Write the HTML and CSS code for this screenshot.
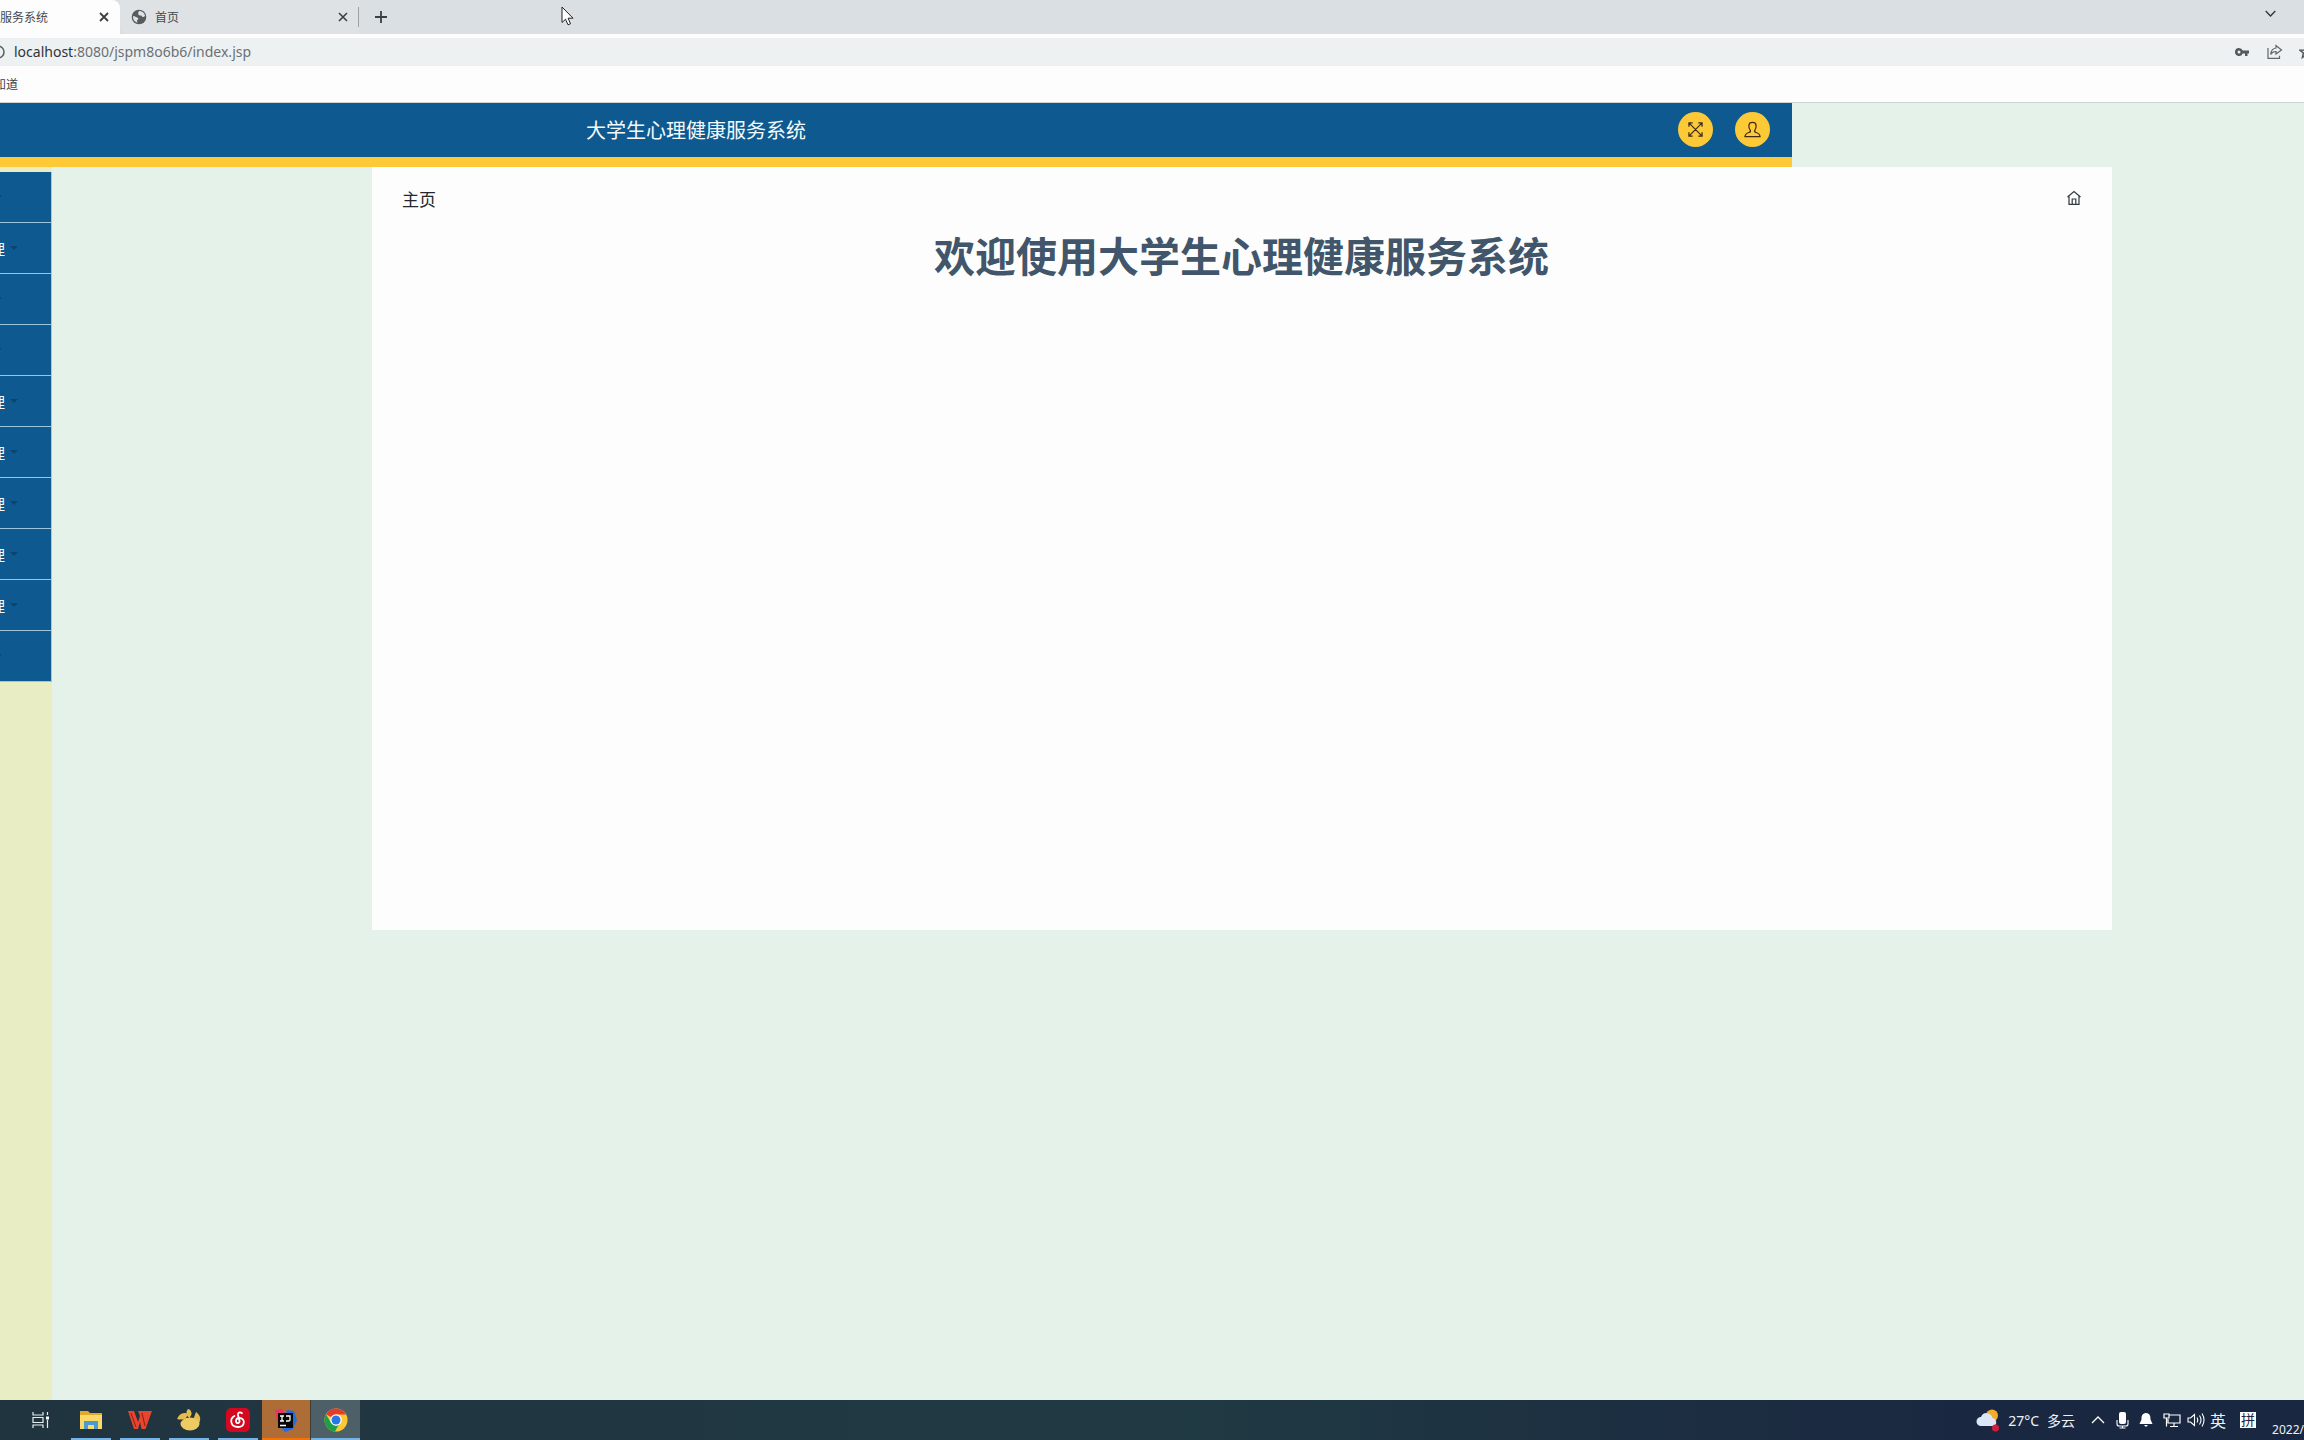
FILE: index.html
```
<!DOCTYPE html>
<html lang="zh-CN">
<head>
<meta charset="utf-8">
<meta name="viewport" content="width=device-width, initial-scale=1">
<title>大学生心理健康服务系统</title>
<link rel="stylesheet" href="styles.css">
</head>
<body>
<div class="tabstrip">
  <div class="tab tab-active"><span class="tab-title">服务系统</span>
    <button class="icon-btn" aria-label="关闭"><svg width="10" height="10" viewBox="0 0 10 10"><path d="M1 1l8 8M9 1l-8 8" stroke="#3c4043" stroke-width="1.8" fill="none"/></svg></button>
  </div>
  <div class="tab tab-idle">
    <svg width="16" height="16" viewBox="0 0 16 16"><circle cx="8" cy="8" r="7.3" fill="#565b5f"/><path d="M2 7c2 0 3 1 5 2 1 .8 0 2-1 2l.4 2.7C3.500 13 1.800 10.500 2 7zM8 2c3.500 0 5.700 2.300 6 5-1.500 1.600-2.800 1.400-3.300-.2L8 6.200C6.800 5.500 7 3.500 8 2z" fill="#dee2e4"/></svg>
    <span class="tab-title">首页</span>
    <button class="icon-btn" aria-label="关闭"><svg width="10" height="10" viewBox="0 0 10 10"><path d="M1 1l8 8M9 1l-8 8" stroke="#3c4043" stroke-width="1.600" fill="none"/></svg></button>
  </div>
  <button class="icon-btn new-tab" aria-label="新标签页"><svg width="12" height="12" viewBox="0 0 12 12"><path d="M6 0v12M0 6h12" stroke="#3c4043" stroke-width="1.800"/></svg></button>
  <button class="icon-btn tab-search" aria-label="搜索标签页"><svg width="11" height="8" viewBox="0 0 11 8"><path d="M.7 1l4.800 5L10.300 1" stroke="#333" stroke-width="1.300" fill="none"/></svg></button>
</div>
<div class="toolbar">
  <div class="address">
    <svg class="info" width="5" height="16" viewBox="0 0 5 16"><path d="M-2 2a6 6 0 0 1 0 12" fill="none" stroke="#5f6368" stroke-width="1.600"/></svg>
    <span class="url"><b>localhost</b>:8080/jspm8o6b6/index.jsp</span>
    <button class="icon-btn" aria-label="密码"><svg width="14" height="10" viewBox="0 0 14 10"><path fill-rule="evenodd" d="M4 1a4 4 0 1 0 3.700 5.400H10V9h2.500V6.400H14V3.600H7.700A4 4 0 0 0 4 1zm0 2.500a1.500 1.500 0 1 1 0 3 1.500 1.500 0 0 1 0-3z" fill="#55595d"/></svg></button>
    <button class="icon-btn" aria-label="分享"><svg width="16" height="16" viewBox="0 0 16 16"><path d="M1 4v10.300h11.500v-2.500M9 4V1.500L14.500 6 9 10V7.500C6.500 7.300 5 8.500 3.700 10.500 4 7 6 4.300 9 4z" fill="none" stroke="#62676b" stroke-width="1.200"/></svg></button>
    <button class="icon-btn star" aria-label="收藏"><svg width="5" height="14" viewBox="0 0 5 14"><path d="M7 1L5.400 5 1 5.300 4.400 8 3.400 12.500 7 10" fill="none" stroke="#55595d" stroke-width="1.500"/></svg></button>
  </div>
  <nav class="bookmarks"><a href="#">知道</a></nav>
</div>

<main class="page">
  <header class="banner">
    <h2>大学生心理健康服务系统</h2>
    <button class="round" aria-label="全屏"><svg width="15" height="15" viewBox="0 0 16 16"><path d="M1 1l14 14M15 1L1 15M1 5V1h4M11 1h4v4M15 11v4h-4M5 15H1v-4" fill="none" stroke="#3b2c16" stroke-width="1.300"/></svg></button>
    <button class="round" aria-label="用户"><svg width="17" height="17" viewBox="0 0 18 18"><path d="M6.700 10C5.300 8.500 5 6.500 5.200 4.500 5.400 2.300 7 1.500 9 1.500s3.600.8 3.800 3c.2 2-.1 4-1.500 5.500-.4 1.500 0 1.800 1.500 2.200 2.400.6 3.800 1.300 4.200 4.300H1c.4-3 1.800-3.700 4.200-4.300 1.500-.4 1.900-.7 1.500-2.200z" fill="none" stroke="#3b2c16" stroke-width="1.300"/></svg></button>
  </header>
  <div class="content">
    <aside class="sidebar">
      <ul>
        <li><a href="#" class="short"><i></i></a></li>
        <li><a href="#">管理<i></i></a></li>
        <li><a href="#" class="short"><i></i></a></li>
        <li><a href="#" class="short"><i></i></a></li>
        <li><a href="#">管理<i></i></a></li>
        <li><a href="#">管理<i></i></a></li>
        <li><a href="#">管理<i></i></a></li>
        <li><a href="#">管理<i></i></a></li>
        <li><a href="#">管理<i></i></a></li>
        <li><a href="#" class="short"><i></i></a></li>
      </ul>
    </aside>
    <section class="panel">
      <div class="crumbs"><span>主页</span>
        <a href="#" aria-label="主页"><svg width="14" height="16" viewBox="0 0 14 16"><path d="M.5 7L7 1.500 13.500 7M2 6v8.300h10V6M5.200 14V9h3.600v5" fill="none" stroke="#303a42" stroke-width="1.200"/></svg></a>
      </div>
      <h1>欢迎使用大学生心理健康服务系统</h1>
    </section>
  </div>
</main>

<footer class="taskbar">
  <button class="task plain" aria-label="任务视图"><svg width="18" height="16" viewBox="0 0 18 16"><path d="M1 0v3h10V0M1 16v-3h10v3M1 5.500h10v5H1zM15.500 0v3M15.500 8v8" fill="none" stroke="#e8edf0" stroke-width="1.200"/><path d="M14 4.500h3v3h-3z" fill="#fff"/></svg></button>
  <button class="task" aria-label="文件资源管理器"><svg width="22" height="20" viewBox="0 0 22 20"><path d="M0 1h8l2 2h12v16H0z" fill="#e0a92b"/><path d="M0 5h22v14H0z" fill="#fbd968"/><path d="M4 19v-8h14v8h-4v-4H8v4z" fill="#4b9bd0"/></svg></button>
  <button class="task" aria-label="WPS"><svg width="24" height="20" viewBox="0 0 24 20"><path d="M0 1h6l4 11 2-6-2-5h14l-6.500 18h-4L12 12l-2 7H6z" fill="#e9442d"/><path d="M3 3l5 14M14 3l3 13" stroke="#8d1c18" stroke-width="1"/></svg></button>
  <button class="task" aria-label="Navicat"><svg width="24" height="22" viewBox="0 0 24 22"><path d="M0 10C2 5 6 3 9.500 4.500c1 2 .5 4-1.500 5.500-2 .5-5 1-8 0zM11 0c2.500.5 3.800 2.500 3.500 5.500l-2 3.500C9 7 8.500 3 11 0zM19 3c4 3 5.500 7 3 11-2-1-4-2.500-5.500-4.500C17.500 7.500 18 5.500 19 3z" fill="#e4bd4d"/><ellipse cx="13" cy="15" rx="9.500" ry="6.500" fill="#edcb62"/></svg></button>
  <button class="task" aria-label="网易云音乐"><svg width="24" height="24" viewBox="0 0 24 24"><rect width="24" height="24" rx="5" fill="#d4081f"/><path d="M16 5.200c-2-1.500-4.500-.7-4 1.800l1.500 6c.5 2.500-3.500 3-3.500.3 0-2 1.500-3.300 3.500-3.300 6 0 6 9-1.500 9C4 19 3.500 10.500 8.500 8" fill="none" stroke="#fff" stroke-width="1.800" stroke-linecap="round"/></svg></button>
  <button class="task idea" aria-label="IntelliJ IDEA"><svg width="24" height="24" viewBox="0 0 24 24"><path d="M1 2l7-1 6 8-8 8-3-3z" fill="#e63664"/><path d="M13 2l7 1 3 9-4 9-8 3-4-5z" fill="#226de0"/><path d="M4 5h15v15H4z" fill="#080808"/><path d="M6 8h4M8 8v5M6 13h4M12 8h4v4q0 1-1.500 1H12M6 17.500h6" stroke="#fff" stroke-width="1.300" fill="none"/></svg></button>
  <button class="task chrome" aria-label="Chrome"><svg width="24" height="24" viewBox="0 0 24 24"><circle cx="12" cy="12" r="11.500" fill="#fcc934"/><path d="M12 12L2 6.200A11.500 11.500 0 0 1 22 6.500H12z" fill="#e33b2e"/><path d="M12 12l-1 11.500A11.500 11.500 0 0 1 2 6.200l5 8.600z" fill="#1ba049"/><path d="M7 14.800q4.500 5 8 1.500l-4 7.200q-5-.5-7-4z" fill="#1ba049"/><circle cx="12" cy="12" r="5.800" fill="#fff"/><circle cx="12" cy="12" r="4.500" fill="#2877e7"/></svg></button>
  <div class="tray">
    <div class="weather">
      <svg width="24" height="24" viewBox="0 0 24 24"><circle cx="16" cy="7.500" r="6" fill="#f4ad2b"/><path d="M5 18a4.500 4.500 0 0 1 0-9 6 6 0 0 1 11.500 1A4.300 4.300 0 0 1 18 18z" fill="#dbe6f6"/><circle cx="19.500" cy="20" r="3.500" fill="#d61b3a"/></svg>
      <span>27°C</span><span class="sky">多云</span>
    </div>
    <div class="status">
      <svg width="14" height="8" viewBox="0 0 14 8"><path d="M1 7l6-6 6 6" fill="none" stroke="#fff" stroke-width="1.300"/></svg>
      <svg width="14" height="18" viewBox="0 0 14 18"><rect x="4" y="1" width="7" height="12" rx="2" fill="#fff"/><path d="M2 9v4q0 2 2 2h7q2 0 2-2V9M7.500 15v2M4.500 17h6" fill="none" stroke="#fff" stroke-width="1.100"/></svg>
      <svg width="14" height="16" viewBox="0 0 14 16"><path d="M7 1C3 1.500 2.500 4 2.500 7.500L.5 12h13l-2-4.500C11.500 4 11 1.500 7 1zM5 13h4l-2 2z" fill="#fff"/></svg>
      <svg width="18" height="16" viewBox="0 0 18 16"><path d="M6 3h11v8H5V7M11 11v3M7 14.500h8M1 2h5v4H1zM3.500 6v8.500" fill="none" stroke="#fff" stroke-width="1.200"/></svg>
      <svg width="18" height="16" viewBox="0 0 18 16"><path d="M1 6h2.500l4-3.500v11L3.500 10H1zM10 5.500q1.500 2.500 0 5M12.500 3.500q3 4.500 0 9M15 1.500q4 6.500 0 13" fill="none" stroke="#fff" stroke-width="1.100"/></svg>
    </div>
    <span class="lang">英</span><span class="ime">拼</span>
    <time class="date">2022/</time>
  </div>
</footer>
<svg class="pointer" width="13" height="20" viewBox="0 0 13 20"><path d="M1 1v15.500l3.500-3.300 2.500 5.600 2.500-1-2.400-5.600H12z" fill="#fff" stroke="#222" stroke-width="1"/></svg>
</body>
</html>
```
FILE: styles.css
```
* { box-sizing: border-box; }
body {
  margin: 0;
  min-height: 100vh;
  display: flex;
  flex-direction: column;
  overflow-x: hidden;
  background: #e4f2ea;
  font-family: "Noto Sans", "Noto Sans CJK SC", sans-serif;
}
button { border: 0; padding: 0; background: none; color: inherit; }
a { color: inherit; text-decoration: none; }
svg { display: block; flex: none; }

.tabstrip {
  display: flex;
  height: 34px;
  background: #dadfe3;
  color: #45494d;
  font-size: 12px;
}
.tab { display: flex; align-items: center; }
.tab-title { flex: 1; white-space: nowrap; }
.tab-active { width: 120px; padding-right: 11px; background: #fdfdfd; border-radius: 0 8px 0 0; }
.tab-idle {
  width: 239px;
  padding: 0 11px;
  gap: 8px;
  background: #dee2e4;
  border-radius: 0 0 0 8px;
}
.tab-idle::after { content: ""; width: 1px; height: 20px; margin: 0 -11px 0 2px; background: #9ca1a5; }
.icon-btn { display: flex; align-items: center; justify-content: center; }
.new-tab { margin-left: 16px; }
.tab-search { margin: 0 28px 6px auto; }

.toolbar { background: #fdfdfd; padding-top: 4px; border-bottom: 1px solid #ccd5d2; }
.address {
  display: flex;
  align-items: center;
  gap: 18px;
  height: 28px;
  background: #eef1f2;
  color: #6b7074;
}
.info { margin-right: -9px; }
.star { margin-left: -2px; }
.url { flex: 1; font-size: 14px; line-height: 20px; }
.url b { font-weight: 400; color: #303438; }
.bookmarks { height: 36px; display: flex; align-items: center; padding-top: 2px; font-size: 12px; color: #3c4043; }
.bookmarks a { margin-left: -6px; line-height: 20px; }

.page { flex: 1; display: flex; flex-direction: column; }
.banner {
  width: 77.78%;
  height: 64px;
  display: flex;
  align-items: center;
  gap: 22px;
  padding: 0 22px 2px 586px;
  background: #0e5a90;
  border-bottom: 10px solid #fdc936;
  color: #f3fafc;
}
.banner h2 { flex: 1; margin: 0; font-size: 20px; font-weight: 400; line-height: 28px; padding-top: 4px; }
.round {
  width: 35px;
  height: 35px;
  display: grid;
  place-items: center;
  border-radius: 50%;
  background: #fdc936;
}
.content { flex: 1; display: flex; align-items: stretch; }
.sidebar { flex: none; width: 52px; padding-top: 5px; background: #e9edc3; overflow: hidden; }
.sidebar ul { list-style: none; margin: 0; padding: 0; border-right: 1px solid #a3c8dc; }
.sidebar a {
  height: 51px;
  display: flex;
  align-items: center;
  justify-content: flex-end;
  gap: 5px;
  padding-right: 33px;
  background: #0e5a90;
  border-bottom: 1px solid #9cc5de;
  color: #f3fafc;
  font-size: 15px;
  white-space: nowrap;
}
.sidebar i { border: 4px solid transparent; border-top-color: #0a456f; border-bottom: 0; }
.sidebar .short { padding-right: 49px; }

.panel {
  flex: 1;
  align-self: flex-start;
  min-height: 53vh;
  margin: 0 192px 0 320px;
  padding: 19px 31px 20px 30px;
  background: #fdfdfd;
}
.crumbs {
  display: flex;
  justify-content: space-between;
  align-items: center;
  height: 24px;
  font-size: 17px;
  color: #23282c;
}
.panel h1 {
  margin: 16px 0 0;
  text-align: center;
  font-size: 41px;
  line-height: 60px;
  font-weight: 700;
  color: #41566a;
}

.taskbar {
  height: 40px;
  display: flex;
  padding-left: 17px;
  background: linear-gradient(90deg, #20343f, #203a43 50%, #1a2740 85%);
  color: #eef2f5;
}
.task {
  width: 49px;
  display: flex;
  align-items: center;
  justify-content: center;
  background: linear-gradient(#76b3e6, #76b3e6) bottom / 40px 2px no-repeat;
}
.task.plain { width: 48px; background: none; }
.task.idea { background: linear-gradient(#f57206, #f57206) bottom / 100% 2px no-repeat #ae6c36; border-right: 1px solid #3d3d37; }
.task.chrome { background: linear-gradient(#76b3e6, #76b3e6) bottom / 100% 2px no-repeat #4d6068; }
.task:nth-child(2) { margin-left: 1px; }
.tray { flex: 1; display: flex; align-items: center; justify-content: flex-end; font-size: 14px; }
.weather { display: flex; align-items: center; gap: 8px; margin-right: 16px; }
.status { display: flex; align-items: center; gap: 10px; }
.status svg:last-child { margin-left: -4px; }
.lang { font-size: 16px; margin: 0 14px 0 5px; }
.ime { width: 16px; height: 16px; font-size: 14px; line-height: 16px; text-align: center; background: #fff; color: #1a2740; }
.date { align-self: flex-end; margin-left: 16px; font-size: 12px; line-height: 20px; }

.pointer { position: absolute; left: 561px; top: 6px; }
```
